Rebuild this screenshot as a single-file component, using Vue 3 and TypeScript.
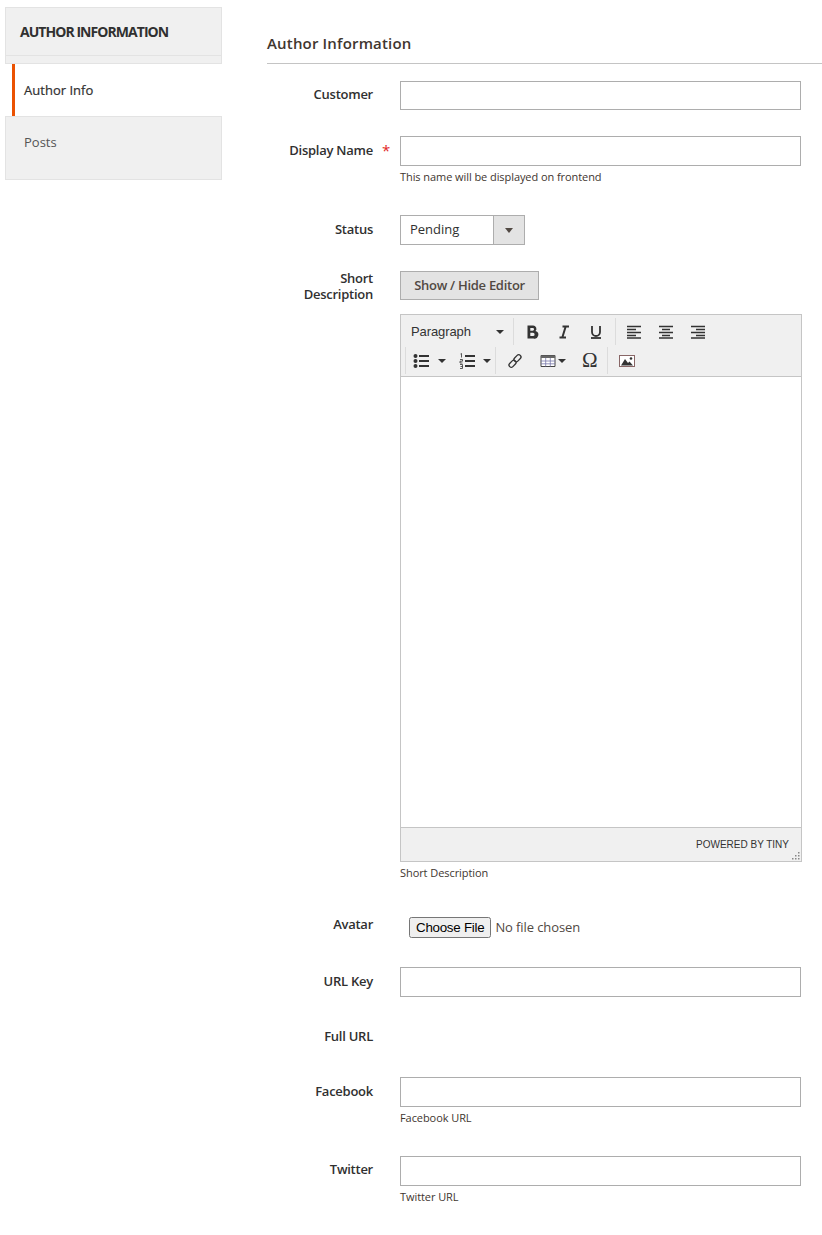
<script setup lang="ts">
const numbers: number[] = [0, 1, 2]
</script>

<template>
  <div class="page">
    <aside class="side">
      <h2 class="side-title">AUTHOR INFORMATION</h2>
      <div class="tab active">Author Info</div>
      <div class="tab posts">Posts</div>
    </aside>
    <main class="main">
      <h3 class="section">Author Information</h3>

      <div class="row r-customer">
        <label class="lbl">Customer</label>
        <div class="ctl"><input class="inp" type="text" /></div>
      </div>

      <div class="row r-name">
        <label class="lbl req">Display Name</label>
        <div class="ctl">
          <input class="inp" type="text" />
          <div class="note">This name will be displayed on frontend</div>
        </div>
      </div>

      <div class="row r-status">
        <label class="lbl">Status</label>
        <div class="ctl">
          <div class="select"><span class="sel-text">Pending</span><span class="sel-btn"><i class="caret-dark"></i></span></div>
        </div>
      </div>

      <div class="row r-desc">
        <label class="lbl two">Short<br />Description</label>
        <div class="ctl">
          <button class="toggle" type="button">Show / Hide Editor</button>
          <div class="editor">
            <div class="toolbar">
              <div class="tb-row">
                <div class="group g-format">
                  <span class="para">Paragraph</span><i class="caret"></i>
                </div>
                <div class="group g-text">
                  <svg class="ic" viewBox="0 0 16 16"><path d="M3.500 1.500h5.500a3.300 3.300 0 0 1 2.500 5.600A3.600 3.600 0 0 1 9.500 14.500H3.500zM6.300 4v2.700H8.700a1.350 1.350 0 0 0 0-2.700zM6.300 8.800V12H9a1.600 1.600 0 0 0 0-3.200z" fill="#333" fill-rule="evenodd"/></svg>
                  <svg class="ic" viewBox="0 0 16 16"><path d="M6.500 2.500h6.500M3.500 13.500h6.500M9.700 2.500 6.300 13.500" stroke="#333" stroke-width="2" fill="none"/></svg>
                  <svg class="ic" viewBox="0 0 16 16"><path d="M4 2v6a4 4 0 0 0 8 0V2" stroke="#333" stroke-width="1.800" fill="none"/><path d="M3 14h10" stroke="#333" stroke-width="1.800"/></svg>
                </div>
                <div class="group g-align">
                  <svg class="ic" viewBox="0 0 16 16"><path d="M1 2.500h14M1 5.500h9M1 8.500h14M1 11.500h9M1 14h14" stroke="#333" stroke-width="1.700"/></svg>
                  <svg class="ic" viewBox="0 0 16 16"><path d="M1 2.500h14M4 5.500h8M1 8.500h14M4 11.500h8M1 14h14" stroke="#333" stroke-width="1.700"/></svg>
                  <svg class="ic" viewBox="0 0 16 16"><path d="M1 2.500h14M6 5.500h9M1 8.500h14M6 11.500h9M1 14h14" stroke="#333" stroke-width="1.700"/></svg>
                </div>
              </div>
              <div class="tb-row second">
                <div class="group g-lists">
                  <svg class="ic" viewBox="0 0 16 16"><circle cx="2.500" cy="3" r="2" fill="#333"/><circle cx="2.500" cy="8" r="2" fill="#333"/><circle cx="2.500" cy="13" r="2" fill="#333"/><path d="M6 3h10M6 8h10M6 13h10" stroke="#333" stroke-width="2"/></svg>
                  <i class="caret c1"></i>
                  <svg class="ic ol" viewBox="0 0 16 16"><path d="M6 3h10M6 8h10M6 13h10" stroke="#333" stroke-width="2"/><path d="M1.500 1 2.500.500V4.500M1 6.500h2.500V8.200H1V10h2.500M1 11.500h2.500v4H1M1.500 13.500h2" stroke="#333" stroke-width=".8" fill="none"/></svg>
                  <i class="caret c1"></i>
                </div>
                <div class="group g-insert">
                  <svg class="ic link" viewBox="0 0 16 16"><g fill="none" stroke="#333" stroke-width="1.300"><rect x="8.200" y="1.300" width="4.500" height="8" rx="2.200" transform="rotate(45 10.500 5.300)"/><rect x="3.300" y="6.700" width="4.500" height="8" rx="2.200" transform="rotate(45 5.500 10.700)"/></g></svg>
                  <span class="tbl">
                    <svg class="ic" viewBox="0 0 16 16"><path d="M1 2.500h14v11H1z" fill="#fff" stroke="#444"/><path d="M1 2.500h14v2.500H1z" fill="#666"/><path d="M1 8h14M1 10.800h14M5.700 5v8.500M10.300 5v8.500" stroke="#77a" stroke-width=".8"/></svg>
                    <i class="caret c2"></i>
                  </span>
                  <span class="omega">Ω</span>
                </div>
                <div class="group g-img">
                  <svg class="ic" viewBox="0 0 16 16"><rect x=".500" y="2.500" width="15" height="11" fill="#fff" stroke="#866"/><path d="M2 12.500 6 6l3 4 1.500-1.500 3.500 4z" fill="#333"/><circle cx="12" cy="5.500" r="1.300" fill="#333"/></svg>
                </div>
              </div>
            </div>
            <div class="edit-area"></div>
            <div class="status-bar">
              <span class="powered">POWERED BY TINY</span>
              <svg class="grip" viewBox="0 0 10 10"><g fill="#888"><rect v-for="n in numbers" :key="n" :x="8 - n * 3" y="8" width="1.500" height="1.500"/><rect x="8" y="5" width="1.500" height="1.500"/><rect x="5" y="5" width="1.500" height="1.500"/><rect x="8" y="2" width="1.500" height="1.500"/></g></svg>
            </div>
          </div>
          <div class="note n-desc">Short Description</div>
        </div>
      </div>

      <div class="row r-avatar">
        <label class="lbl">Avatar</label>
        <div class="ctl file-ctl"><input class="file" type="file" /></div>
      </div>

      <div class="row r-url">
        <label class="lbl">URL Key</label>
        <div class="ctl"><input class="inp" type="text" /></div>
      </div>

      <div class="row r-full">
        <label class="lbl">Full URL</label>
      </div>

      <div class="row r-fb">
        <label class="lbl">Facebook</label>
        <div class="ctl">
          <input class="inp" type="text" />
          <div class="note">Facebook URL</div>
        </div>
      </div>

      <div class="row r-tw">
        <label class="lbl">Twitter</label>
        <div class="ctl">
          <input class="inp" type="text" />
          <div class="note">Twitter URL</div>
        </div>
      </div>
    </main>
  </div>
</template>

<style>
html, body { margin: 0; background: #fff; }
</style>

<style scoped>
.page {
  display: flex;
  width: 822px;
  height: 1235px;
  overflow: hidden;
  font-family: "Open Sans", sans-serif;
  color: #303030;
  font-size: 13px;
}
.side { width: 217px; margin: 7px 0 0 5px; flex: none; }
.side-title {
  margin: 0;
  height: 57px;
  box-sizing: border-box;
  padding: 14px 0 0 14px;
  background: #f0f0f0;
  border: 1px solid #e3e3e3;
  font-size: 14px;
  line-height: 19px;
  font-weight: 700;
  letter-spacing: -0.95px;
  color: #303030;
  position: relative;
}
.side-title::after {
  content: "";
  position: absolute;
  left: 0;
  right: 0;
  top: 47px;
  border-top: 1px solid #e3e3e3;
}
.tab { box-sizing: border-box; font-size: 13px; }
.active {
  height: 52px;
  margin-left: 7px;
  border-left: 3px solid #eb5202;
  background: #fff;
  padding: 17px 0 0 9px;
  line-height: 18px;
  color: #303030;
  font-weight: 400;
  letter-spacing: 0.02px;
  -webkit-text-stroke: 0.2px #303030;
}
.posts {
  height: 64px;
  background: #f0f0f0;
  border: 1px solid #e3e3e3;
  padding: 16px 0 0 18px;
  line-height: 18px;
  color: #555;
}
.main { margin-left: 45px; width: 555px; flex: none; }
.section {
  margin: 0;
  box-sizing: border-box;
  height: 64px;
  padding-top: 33px;
  border-bottom: 1px solid #c4c4c4;
  font-size: 15px;
  line-height: 20px;
  font-weight: 600;
  letter-spacing: 0.17px;
  color: #41362f;
}
.row { display: flex; align-items: flex-start; }
.lbl {
  width: 106px;
  flex: none;
  text-align: right;
  font-size: 13px;
  line-height: 16px;
  font-weight: 600;
  letter-spacing: -0.25px;
  color: #303030;
  padding-top: 6px;
  margin-right: 27px;
  position: relative;
}
.req::after {
  content: "*";
  position: absolute;
  left: 115px;
  top: 6px;
  color: #e22626;
  font-size: 15px;
  font-weight: 400;
}
.two { padding-top: 0; margin-top: -1px; }
.ctl { width: 401px; flex: none; }
.inp {
  display: block;
  width: 401px;
  height: 30px;
  box-sizing: border-box;
  margin: 0;
  padding: 0 10px;
  border: 1px solid #adadad;
  background: #fff;
  outline: none;
  font: inherit;
}
.note {
  font-size: 11px;
  line-height: 14px;
  margin-top: 4px;
  letter-spacing: -0.07px;
  color: #41362f;
}
.r-customer { margin-top: 17px; height: 29px; }
.r-customer .lbl { padding-top: 5px; }
.r-customer .inp { height: 29px; }
.r-name { margin-top: 26px; height: 54px; }
.r-status { margin-top: 25px; height: 30px; }
.r-desc { margin-top: 26px; }
.r-avatar { margin-top: 30px; height: 27px; }
.r-url { margin-top: 30px; height: 30px; }
.r-full { margin-top: 25px; height: 30px; }
.r-fb { margin-top: 25px; height: 49px; }
.r-tw { margin-top: 30px; }
.r-tw .lbl { padding-top: 5px; }
.select {
  display: flex;
  width: 125px;
  height: 30px;
  box-sizing: border-box;
  border: 1px solid #adadad;
  background: #fff;
}
.sel-text { width: 92px; padding-left: 9px; box-sizing: border-box; line-height: 27px; color: #303030; }
.sel-btn {
  flex: 1;
  background: #e3e3e3;
  border-left: 1px solid #adadad;
  display: flex;
  align-items: center;
  justify-content: center;
}
.caret-dark {
  width: 0; height: 0;
  border-left: 4px solid transparent;
  border-right: 4px solid transparent;
  border-top: 5px solid #514943;
}
.toggle {
  display: block;
  width: 139px;
  height: 29px;
  box-sizing: border-box;
  margin: 0;
  padding: 0 0 2px;
  border: 1px solid #adadad;
  background: #e3e3e3;
  font: 600 13px/16px "Open Sans", sans-serif;
  letter-spacing: -0.28px;
  color: #514943;
}
.editor {
  margin-top: 14px;
  width: 402px;
  height: 548px;
  box-sizing: border-box;
  border: 1px solid #c5c5c5;
  display: flex;
  flex-direction: column;
}
.toolbar {
  height: 61px;
  flex: none;
  background: #f0f0f0;
  border-bottom: 1px solid #c5c5c5;
  font-family: "Liberation Sans", Arial, sans-serif;
  box-sizing: content-box;
}
.tb-row { display: flex; height: 28px; padding: 3px 0 0 4px; }
.second { height: 28px; padding-top: 1px; }
.group {
  display: flex;
  align-items: center;
  height: 27px;
  border-right: 1px solid #dcdcdc;
  box-sizing: border-box;
}
.group:last-child { border-right: none; }
.ic { width: 16px; height: 16px; flex: none; display: block; }
.caret {
  width: 0; height: 0;
  border-left: 4px solid transparent;
  border-right: 4px solid transparent;
  border-top: 4px solid #333;
  flex: none;
}
.para { font-size: 13px; letter-spacing: -0.1px; color: #333; padding-left: 6px; width: 91px; box-sizing: border-box; }
.g-format { width: 109px; }
.g-text { width: 102px; padding-left: 10px; gap: 16px; }
.g-align { padding-left: 10px; gap: 16px; border-right: none; }
.g-lists { width: 91px; padding-left: 7px; border-left: 1px solid #dcdcdc; }
.c1 { margin-left: 9px; margin-right: 13px; }
.c1:last-child { margin-left: 8px; margin-right: 0; }
.g-insert { width: 112px; padding-left: 11px; }
.tbl { display: flex; align-items: center; margin-left: 17px; }
.c2 { margin-left: 2px; }
.omega { font: 21px/1 "Liberation Serif", serif; color: #333; margin-left: 16px; }
.g-img { padding-left: 11px; }
.edit-area { flex: 1; background: #fff; }
.status-bar {
  height: 34px;
  flex: none;
  box-sizing: border-box;
  background: #f0f0f0;
  border-top: 1px solid #c5c5c5;
  position: relative;
  font-family: "Liberation Sans", Arial, sans-serif;
}
.powered {
  position: absolute;
  right: 12px;
  top: 11px;
  font-size: 10px;
  line-height: 12px;
  color: #333;
}
.grip { position: absolute; right: 1px; bottom: 1px; width: 10px; height: 10px; }
.n-desc { margin-top: 4px; }
.file-ctl { padding: 7px 0 0 9px; width: 392px; box-sizing: content-box; }
.file {
  display: block;
  font-family: "Open Sans", sans-serif;
  font-size: 13px;
  letter-spacing: -0.1px;
  color: #514943;
}
.file::file-selector-button {
  font-family: "Liberation Sans", Arial, sans-serif;
  font-size: 13.333px;
  letter-spacing: -0.25px;
  color: #000;
  padding: 1px 5px;
  margin-right: 4px;
}
</style>
